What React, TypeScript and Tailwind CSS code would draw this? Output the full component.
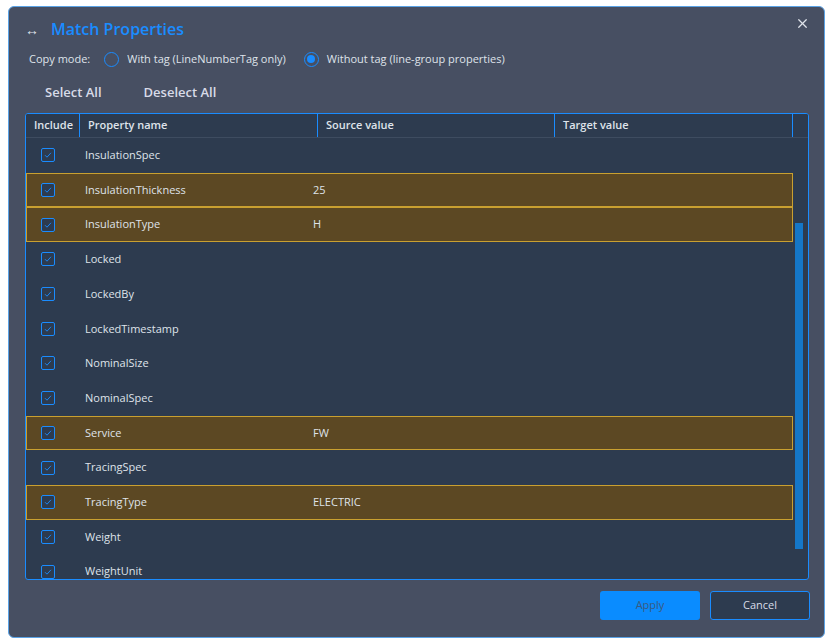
import { X } from "lucide-react";

const ROWS: [string, string, boolean][] = [
  ["InsulationSpec", "", false],
  ["InsulationThickness", "25", true],
  ["InsulationType", "H", true],
  ["Locked", "", false],
  ["LockedBy", "", false],
  ["LockedTimestamp", "", false],
  ["NominalSize", "", false],
  ["NominalSpec", "", false],
  ["Service", "FW", true],
  ["TracingSpec", "", false],
  ["TracingType", "ELECTRIC", true],
  ["Weight", "", false],
  ["WeightUnit", "", false],
];

const Check = () => (
  <span className="flex h-[14px] w-[14px] items-center justify-center rounded-[2px] border border-[#1a8cff] bg-[#2d3b4f]">
    <svg width="8" height="8" viewBox="0 0 8 8">
      <path d="M1 4.2 L3 6.2 L7 1.8" stroke="#1a8cff" strokeWidth="0.9" fill="none" />
    </svg>
  </span>
);

export default function App() {
  return (
    <div
      className="h-[644px] w-[832px] bg-white pl-[8px] pt-[6px]"
      style={{ fontFamily: '"Open Sans", "Noto Sans", sans-serif' }}
    >
      <div className="flex h-[632px] w-[817px] flex-col rounded-[6px] border border-[#5ba3e6] bg-[#474f62] text-[#dfe3ea]">
        <div className="flex h-[42px] items-center justify-between pl-[16px] pr-[14px] pt-[2px]">
          <div className="flex items-center gap-[12px]">
            <span className="text-[14px] text-[#dfe3ea]">↔</span>
            <span className="text-[16px] font-semibold text-[#1a8cff]">Match Properties</span>
          </div>
          <X size={15} className="mb-[12px] text-[#dfe3ea]" />
        </div>
        <div className="flex h-[20px] items-center gap-[14px] pl-[20px] text-[11px]">
          <span>Copy mode:</span>
          <label className="flex items-center gap-[8px]">
            <span className="h-[15px] w-[15px] rounded-full border-[1.5px] border-[#1a8cff]" />
            With tag (LineNumberTag only)
          </label>
          <label className="ml-[4px] flex items-center gap-[8px]">
            <span className="flex h-[15px] w-[15px] items-center justify-center rounded-full border-[1.5px] border-[#1a8cff]">
              <span className="h-[8px] w-[8px] rounded-full bg-[#1a8cff]" />
            </span>
            Without tag (line-group properties)
          </label>
        </div>
        <div className="flex h-[44px] items-center gap-[42px] pl-[36px] pt-[4px] text-[13px] font-semibold text-[#d8dbe8]">
          <span>Select All</span>
          <span>Deselect All</span>
        </div>
        <div className="relative ml-[16px] h-[467px] w-[784px] overflow-hidden rounded-[3px] border-[1.5px] border-[#1a8cff] bg-[#2d3b4f] text-[11px]">
          <div className="flex h-[24px] items-center border-b border-[#3e4c60] bg-[#2d3b4f] font-semibold">
            <div className="flex h-full w-[54px] items-center border-r border-[#1a8cff] pl-[8px]">Include</div>
            <div className="flex h-full w-[238px] items-center border-r border-[#1a8cff] pl-[8px]">Property name</div>
            <div className="flex h-full w-[237px] items-center border-r border-[#1a8cff] pl-[8px]">Source value</div>
            <div className="flex h-full w-[238px] items-center border-r border-[#1a8cff] pl-[8px]">Target value</div>
          </div>
          {ROWS.map(([name, val, hi]) => (
            <div
              key={name}
              className={`flex h-[34.7px] w-[767px] items-center ${hi ? "border border-[#c9a030] bg-[#5c4823]" : "border border-transparent"}`}
            >
              <div className="flex w-[40px] justify-center pl-[1px]"><Check /></div>
              <div className="w-[238px] pl-[18px]">{name}</div>
              <div className="pl-[8px]">{val}</div>
            </div>
          ))}
          <div className="absolute right-[5px] top-[109px] h-[326px] w-[8px] bg-[#1577c8]" />
        </div>
        <div className="flex justify-end gap-[10px] pr-[14px] pt-[11px] text-[11px]">
          <button className="h-[29px] w-[100px] rounded-[3px] bg-[#0a8cff] text-[#3a5a80]">Apply</button>
          <button className="h-[29px] w-[100px] rounded-[3px] border border-[#1a8cff] bg-[#2d3b4f] text-[#d8dbe8]">Cancel</button>
        </div>
      </div>
    </div>
  );
}
